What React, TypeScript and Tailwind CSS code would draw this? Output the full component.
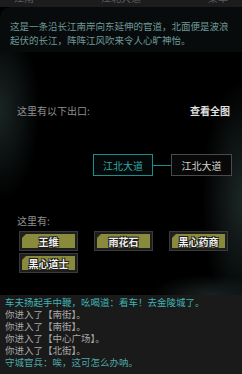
import React from "react";

const npcs = ["王维", "雨花石", "黑心药商", "黑心道士"];

const logs = [
  { text: "车夫扬起手中鞭，吆喝道：看车！去金陵城了。", color: "text-[#3fb3b3]" },
  { text: "你进入了【南街】。", color: "text-[#a8a8a8]" },
  { text: "你进入了【南街】。", color: "text-[#a8a8a8]" },
  { text: "你进入了【中心广场】。", color: "text-[#a8a8a8]" },
  { text: "你进入了【北街】。", color: "text-[#a8a8a8]" },
  { text: "守城官兵：唉，这可怎么办呐。", color: "text-[#4fa7a7]" },
];

const outline = "[text-shadow:0_0_1px_#000,1px_1px_0_#222,-1px_-1px_0_#222,1px_-1px_0_#222,-1px_1px_0_#222]";

export default function App() {
  return (
    <div
      className="w-[242px] h-[374px] overflow-hidden flex flex-col bg-black bg-[radial-gradient(ellipse_40px_90px_at_0px_110px,#1a2424_0%,transparent_100%),radial-gradient(ellipse_40px_120px_at_242px_200px,#1c2626_0%,transparent_100%),radial-gradient(ellipse_60px_20px_at_210px_295px,#1a2222_0%,transparent_100%)]"
      style={{ fontFamily: '"Noto Sans CJK SC", "Noto Sans", sans-serif' }}
    >
      {/* header, scrolled mostly out of view */}
      <div className="h-[7px] shrink-0 overflow-hidden bg-[#1c1c1c] flex justify-between px-[14px] text-[10px] leading-[10px] text-[#5c5c5c]">
        <span className="-mt-[7px]">江南</span>
        <span className="-mt-[7px]">江北大道</span>
        <span className="-mt-[7px]">菜单</span>
      </div>

      {/* description */}
      <div className="h-[45px] shrink-0 bg-[#080b0b] rounded-tl-[10px] px-[10px] pt-[12px] text-[9.5px] leading-[14px] text-[#6f9a9a]">
        这是一条沿长江南岸向东延伸的官道，北面便是波浪起伏的长江，阵阵江风吹来令人心旷神怡。
      </div>

      {/* exits */}
      <div className="mt-[52px] flex justify-between pl-[17px] pr-[12px] text-[10px] leading-[14px]">
        <span className="text-[#8f8f8f]">这里有以下出口:</span>
        <span className="text-[#e0e0e0] font-bold">查看全图</span>
      </div>

      <div className="mt-[36px] flex items-center justify-end pr-[10px]">
        <div className="w-[60px] h-[22px] border border-[#1f8c8c] bg-[#050808] flex items-center justify-center text-[10px] text-[#2fa9a9]">
          江北大道
        </div>
        <div className="w-[18px] h-px bg-[#1f8c8c]" />
        <div className="w-[61px] h-[22px] border border-[#4a4a4a] bg-[#080808] flex items-center justify-center text-[10px] text-[#d4d4d4]">
          江北大道
        </div>
      </div>

      {/* npcs */}
      <div className="mt-[38px] pl-[17px] text-[10px] leading-[14px] text-[#8f8f8f]">这里有:</div>

      <div className="mt-[3px] ml-[19px] grid grid-cols-[59px_59px_59px] gap-x-[16px] gap-y-[2px]">
        {npcs.map((n) => (
          <div
            key={n}
            className="relative h-[20px] border border-[#3a3a3a] bg-[#1e1e1e] p-[2px]"
          >
            <div className="relative h-full bg-[#8a8a3c] flex items-center justify-center">
              <div className="absolute left-0 top-0 w-0 h-0 border-t-[4px] border-r-[4px] border-t-[#222] border-r-transparent" />
              <span className={`text-[10px] font-bold text-[#f2f2f2] ${outline}`}>{n}</span>
            </div>
          </div>
        ))}
      </div>

      {/* log */}
      <div className="mt-[22px] flex-1 bg-[#1a1a1a] px-[5px] pt-[1px] text-[9.5px] leading-[12px]">
        {logs.map((l, i) => (
          <div key={i} className={l.color}>
            {l.text}
          </div>
        ))}
      </div>
    </div>
  );
}
